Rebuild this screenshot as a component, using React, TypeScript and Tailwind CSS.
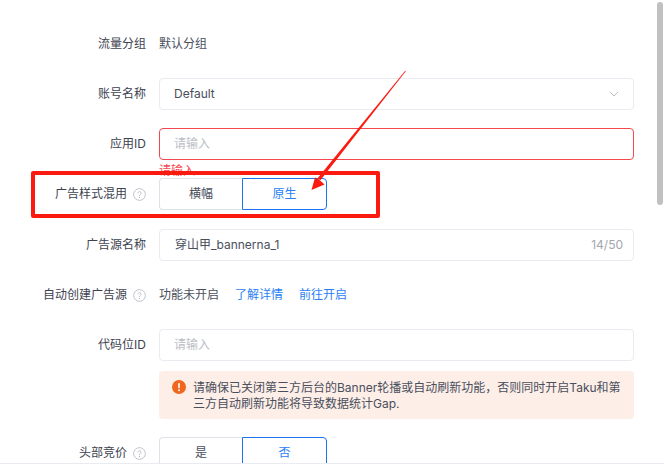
const FONT = "font-['Inter','Noto_Sans_CJK_SC',sans-serif]";

function Help() {
  return (
    <svg width="13" height="13" viewBox="0 0 14 14" fill="none" className="ml-[6px] shrink-0">
      <circle cx="7" cy="7" r="6.3" stroke="#b4b7bf" strokeWidth="0.9" />
      <path d="M5.3 5.5a1.7 1.7 0 1 1 2.6 1.45c-.55.35-.9.65-.9 1.3" stroke="#b4b7bf" strokeWidth="0.9" strokeLinecap="round" />
      <circle cx="7" cy="10.1" r="0.6" fill="#b4b7bf" />
    </svg>
  );
}

function Row({ label, help, spacing = 'mb-[18px]', children }: { label: string; help?: boolean; spacing?: string; children: React.ReactNode }) {
  return (
    <div className={`flex items-center h-8 ${spacing}`}>
      <div className="w-[146px] shrink-0 flex items-center justify-end text-xs text-[#3d4250]">
        {label}
        {help && <Help />}
      </div>
      <div className="ml-[13px] w-[475px] h-full flex items-center text-xs text-[#4a4f5c]">{children}</div>
    </div>
  );
}

function Input({ placeholder, error }: { placeholder: string; error?: boolean }) {
  return (
    <div className={`w-full h-8 rounded border px-[14px] flex items-center text-xs text-[#bcbec4] ${error ? 'border-[#f5474f]' : 'border-[#e9ebf0]'}`}>
      {placeholder}
    </div>
  );
}

function Segments({ left, right }: { left: string; right: string }) {
  return (
    <div className="flex h-8 w-[168px] text-xs">
      <div className="w-[83px] flex items-center justify-center rounded-l border border-r-0 border-[#dfe1e8] text-[#4a4f5c]">{left}</div>
      <div className="w-[85px] flex items-center justify-center rounded-r border border-[#1a73f0] text-[#2a7ff5]">{right}</div>
    </div>
  );
}

export default function App() {
  return (
    <div className={`relative w-[664px] h-[466px] overflow-hidden bg-white ${FONT}`}>
      <div className="pt-7">
        <Row label="流量分组">默认分组</Row>
        <Row label="账号名称">
          <div className="w-full h-8 rounded border border-[#e9ebf0] pl-[14px] pr-[14px] flex items-center justify-between">
            Default
            <svg width="10" height="6" viewBox="0 0 10 6" fill="none">
              <path d="M1 1l4 4 4-4" stroke="#b9bbc2" strokeWidth="1" />
            </svg>
          </div>
        </Row>
        <Row label="应用ID">
          <div className="relative w-full">
            <Input placeholder="请输入" error />
            <div className="absolute left-0 top-[33px] text-xs leading-[20px] text-[#f5474f]">请输入</div>
          </div>
        </Row>
        <Row label="广告样式混用" help spacing="mb-[19px]">
          <Segments left="横幅" right="原生" />
        </Row>
        <Row label="广告源名称">
          <div className="w-full h-8 rounded border border-[#e9ebf0] pl-[15px] pr-[10px] flex items-center justify-between">
            穿山甲_bannerna_1
            <span className="text-[#a3a6ae]">14/50</span>
          </div>
        </Row>
        <Row label="自动创建广告源" help>
          功能未开启
          <span className="ml-4 text-[#2a7ff5]">了解详情</span>
          <span className="ml-4 text-[#2a7ff5]">前往开启</span>
        </Row>
        <Row label="代码位ID" spacing="mb-[10px]">
          <Input placeholder="请输入" />
        </Row>
        <div className="ml-[159px] w-[475px] h-12 mb-[18px] rounded bg-[#fdeee8] flex pl-[13px] pr-3 items-start pt-[9px]">
          <svg width="14" height="14" viewBox="0 0 14 14" className="shrink-0">
            <circle cx="7" cy="7" r="7" fill="#f0661e" />
            <rect x="6.2" y="3" width="1.6" height="5.4" rx="0.8" fill="#fff" />
            <circle cx="7" cy="10.3" r="0.95" fill="#fff" />
          </svg>
          <p className="ml-[7px] text-xs leading-4 text-[#4a4f5c]">
            请确保已关闭第三方后台的Banner轮播或自动刷新功能，否则同时开启Taku和第三方自动刷新功能将导致数据统计Gap.
          </p>
        </div>
        <Row label="头部竞价" help>
          <Segments left="是" right="否" />
        </Row>
      </div>

      {/* page footer edge */}
      <div className="absolute left-0 right-0 bottom-0 h-[3px] bg-white border-t border-[#e9ebf0]" />

      {/* scrollbar thumb */}
      <div className="absolute left-[657px] top-[2px] w-[6px] h-[203px] rounded-full bg-[#c1c1c1]" />

      {/* red annotation */}
      <div className="absolute left-[31px] top-[171px] w-[349px] h-[47px] border-4 border-[#fb1a10] rounded-[2px]" />
      <svg className="absolute left-0 top-0" width="664" height="466" viewBox="0 0 664 466" fill="none">
        <path d="M405.8 71.2L405.2 70.8L317.6 178.2L320.4 180.2Z" fill="#fb1a10" />
        <path d="M311.5 190L315 177.5L319 179.5L324.5 184.5Z" fill="#fb1a10" />
      </svg>
    </div>
  );
}
